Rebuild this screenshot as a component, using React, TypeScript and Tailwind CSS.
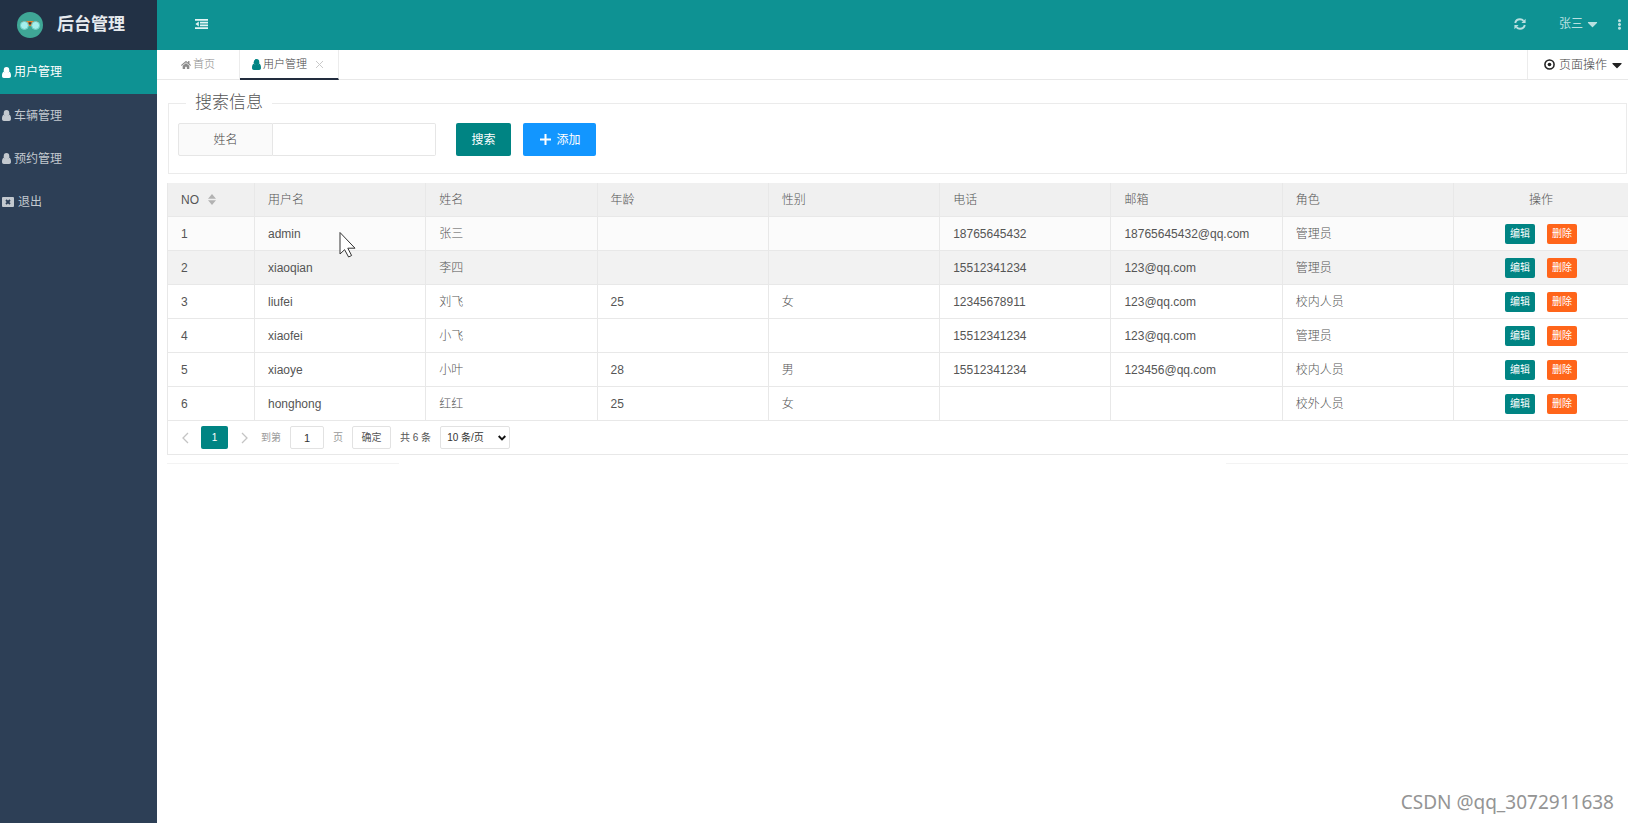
import React from "react";
import { FaCaretDown, FaEllipsisV, FaHome } from "react-icons/fa";

type User = {
  username: string;
  name: string;
  age: string;
  sex: string;
  phone: string;
  email: string;
  role: string;
};

const users: User[] = [
  { username: "admin", name: "张三", age: "", sex: "", phone: "18765645432", email: "18765645432@qq.com", role: "管理员" },
  { username: "xiaoqian", name: "李四", age: "", sex: "", phone: "15512341234", email: "123@qq.com", role: "管理员" },
  { username: "liufei", name: "刘飞", age: "25", sex: "女", phone: "12345678911", email: "123@qq.com", role: "校内人员" },
  { username: "xiaofei", name: "小飞", age: "", sex: "", phone: "15512341234", email: "123@qq.com", role: "管理员" },
  { username: "xiaoye", name: "小叶", age: "28", sex: "男", phone: "15512341234", email: "123456@qq.com", role: "校内人员" },
  { username: "honghong", name: "红红", age: "25", sex: "女", phone: "", email: "", role: "校外人员" },
];

const columns = ["用户名", "姓名", "年龄", "性别", "电话", "邮箱", "角色"];

const rowColors = ["bg-[#fbfbfb]", "bg-[#f2f2f2]"];

function UserIcon({ className }: { className?: string }) {
  return (
    <svg viewBox="0 0 10 12" className={className} fill="currentColor" aria-hidden="true">
      <ellipse cx="5" cy="3.4" rx="3.1" ry="3.4" />
      <path d="M2.2 5C.7 5.4 0 7.1 0 9.800 0 11.200.9 12 2 12h6c1.100 0 2-.8 2-2.200C10 7.100 9.300 5.400 7.800 5 7 6.300 6 6.600 5 6.600S3 6.300 2.200 5Z" />
    </svg>
  );
}

function ExitIcon({ className }: { className?: string }) {
  return (
    <svg viewBox="0 0 12 10" className={className} aria-hidden="true">
      <rect width="12" height="10" rx="1" fill="currentColor" />
      <path d="M4 3l4 4M8 3L4 7" stroke="#2d3f56" strokeWidth="1.800" />
    </svg>
  );
}

function RefreshIcon() {
  return (
    <svg viewBox="0 0 12 12" className="size-3" fill="none" stroke="currentColor" strokeWidth="1.900" aria-hidden="true">
      <path d="M1.200 5C1.700 2.800 3.600 1.300 6 1.300c1.500 0 2.700.6 3.600 1.600M10.800 7C10.300 9.200 8.400 10.700 6 10.700c-1.500 0-2.700-.6-3.600-1.600" />
      <path d="M11.600.8v4.200H7.400zM.4 11.200V7h4.200z" fill="currentColor" stroke="none" />
    </svg>
  );
}

function TargetIcon() {
  return (
    <svg viewBox="0 0 12 12" className="size-[11px]" fill="none" aria-hidden="true">
      <circle cx="6" cy="6" r="5" stroke="#222" strokeWidth="1.700" />
      <circle cx="6" cy="6" r="2" fill="#222" />
    </svg>
  );
}

function Logo() {
  return (
    <svg viewBox="0 0 26 26" className="size-[26px]" aria-hidden="true">
      <circle cx="13" cy="13" r="13" fill="#3fa796" />
      <path d="M5 9h16l1 3H4z" fill="#8a5a38" />
      <path d="M9.500 9h7L14.800 14h-3.600z" fill="#e08634" />
      <path d="M11.600 10.200h2.800v2.300h-2.800z" fill="#3a3d3c" />
      <circle cx="7.400" cy="13.400" r="4" fill="#a5efec" stroke="#6fcfc5" />
      <circle cx="18.600" cy="13.400" r="4" fill="#a5efec" stroke="#6fcfc5" />
    </svg>
  );
}

function FoldIcon() {
  return (
    <svg viewBox="0 0 13 10" className="h-[10px] w-[13px]" fill="currentColor" aria-hidden="true">
      <path d="M0 0h13v1.800H0zM5 2.700h8v1.800H5zM5 5.500h8v1.800H5zM0 8.200h13V10H0zM3.800 2.400v5.200L.4 5z" />
    </svg>
  );
}

function Chevron({ d }: { d: string }) {
  return (
    <svg viewBox="0 0 7 12" className="h-3 w-[7px]" fill="none" stroke="#c4c4c4" strokeWidth="1.300" aria-hidden="true">
      <path d={d} />
    </svg>
  );
}

function Sidebar() {
  const items = ["车辆管理", "预约管理"];
  return (
    <aside className="w-[157px] shrink-0 bg-[#2d3f56]">
      <div className="flex h-[50px] items-center gap-[14px] bg-[#223145] pl-[17px]">
        <Logo />
        <h1 className="text-[17px] font-bold text-[#e6eaee]">后台管理</h1>
      </div>
      <nav>
        <a href="#" className="flex h-11 items-center gap-[3px] bg-[#0e9293] pl-[2px] text-xs text-white">
          <UserIcon className="h-[11px] w-[9px]" />
          用户管理
        </a>
        {items.map((item) => (
          <a key={item} href="#" className="flex h-[43px] items-center gap-[3px] pl-[2px] text-xs text-[#c3c9cf]">
            <UserIcon className="h-[11px] w-[9px]" />
            {item}
          </a>
        ))}
        <a href="#" className="flex h-11 items-center gap-1 pl-[2px] text-xs text-[#c3c9cf]">
          <ExitIcon className="h-[10px] w-3" />
          退出
        </a>
      </nav>
    </aside>
  );
}

function Header() {
  return (
    <header className="flex h-[50px] items-center bg-[#0e9293] pb-[2px] text-[#b9e0e0]">
      <button type="button" aria-label="收起菜单" className="ml-[38px] text-[#e4f5f5]">
        <FoldIcon />
      </button>
      <button type="button" aria-label="刷新" className="ml-auto">
        <RefreshIcon />
      </button>
      <button type="button" className="ml-[33px] flex items-center gap-1 text-xs">
        张三
        <FaCaretDown className="h-4 w-[11px]" />
      </button>
      <button type="button" aria-label="更多" className="mr-[3px] ml-4">
        <FaEllipsisV className="size-[11px]" />
      </button>
    </header>
  );
}

function TabBar() {
  return (
    <div className="flex h-[30px] border-b border-[#e8e8e8] text-[11px]">
      <a href="#" className="flex w-[83px] items-center gap-[2px] border-r border-[#ececec] pl-6 font-light text-[#8b8b8b]">
        <FaHome className="size-[10px] text-[#8a8a8a]" />
        首页
      </a>
      <div className="flex h-[30px] w-[99px] items-center border-r border-b-2 border-r-[#ececec] border-b-[#222c3e] pl-3 font-light text-[#444]">
        <a href="#" className="flex items-center gap-[2px]">
          <UserIcon className="h-[11px] w-[9px] text-[#008483]" />
          用户管理
        </a>
        <button type="button" aria-label="关闭标签" className="ml-[9px]">
          <svg viewBox="0 0 7 7" className="size-[7px]" stroke="#c9c9c9" aria-hidden="true">
            <path d="M0 0l7 7M7 0L0 7" />
          </svg>
        </button>
      </div>
      <button type="button" className="ml-auto flex items-center gap-1 border-l border-[#ececec] pr-[5px] pl-4 text-xs font-light text-[#444]">
        <TargetIcon />
        页面操作
        <FaCaretDown className="h-4 w-3 text-[#222]" />
      </button>
    </div>
  );
}

function SearchPanel() {
  return (
    <fieldset className="mx-px border border-[#ebebeb] px-[9px] pb-[17px]">
      <legend className="ml-2 px-[9px] text-[17px] leading-6 font-light text-[#555]">搜索信息</legend>
      <form className="mt-2 flex h-[33px] text-xs" onSubmit={(e) => e.preventDefault()}>
        <label htmlFor="name" className="flex w-[95px] items-center justify-center rounded-l-xs border border-[#e6e6e6] bg-[#fafafa] font-light text-[#444]">
          姓名
        </label>
        <input id="name" type="text" className="w-[163px] rounded-r-xs border border-l-0 border-[#e6e6e6] px-2 outline-none" />
        <button type="submit" className="ml-5 w-[55px] rounded-xs bg-[#008483] text-white">
          搜索
        </button>
        <button type="button" className="ml-3 flex w-[73px] items-center justify-center gap-[5px] rounded-xs bg-[#1296ff] pl-[2px] text-white">
          <svg viewBox="0 0 11 11" className="size-[11px]" stroke="currentColor" strokeWidth="2" aria-hidden="true">
            <path d="M5.500 0v11M0 5.500h11" />
          </svg>
          添加
        </button>
      </form>
    </fieldset>
  );
}

function UserTable() {
  const cell = "border-r border-b border-[#e8e8e8] px-[13px] text-left font-light";
  return (
    <table className="w-full table-fixed border-separate border-spacing-0 text-xs text-[#555]">
      <thead>
        <tr className="h-[34px] bg-[#f0f0f0]">
          <th className={`w-[87px] ${cell}`}>
            <span className="flex items-center gap-[9px]">
              NO
              <svg viewBox="0 0 8 11" className="h-[11px] w-2" fill="#b2b2b2" aria-hidden="true">
                <path d="M4 0l4 4.700H0zM4 11l4-4.700H0z" />
              </svg>
            </span>
          </th>
          {columns.map((c) => (
            <th key={c} className={cell}>
              {c}
            </th>
          ))}
          <th className="w-[174px] border-b border-[#e8e8e8] text-center font-light">操作</th>
        </tr>
      </thead>
      <tbody>
        {users.map((u, i) => (
          <tr key={u.username} className={`h-[34px] ${rowColors[i] ?? "bg-white"}`}>
            <td className={cell}>{i + 1}</td>
            <td className={cell}>{u.username}</td>
            <td className={cell}>{u.name}</td>
            <td className={cell}>{u.age}</td>
            <td className={cell}>{u.sex}</td>
            <td className={cell}>{u.phone}</td>
            <td className={cell}>{u.email}</td>
            <td className={cell}>{u.role}</td>
            <td className="border-b border-[#e8e8e8]">
              <div className="flex justify-center gap-3 text-[10px] text-white">
                <button type="button" className="h-5 w-[30px] rounded-xs bg-[#008483]">
                  编辑
                </button>
                <button type="button" className="h-5 w-[30px] rounded-xs bg-[#ff651a]">
                  删除
                </button>
              </div>
            </td>
          </tr>
        ))}
      </tbody>
    </table>
  );
}

function Pager() {
  return (
    <div className="flex h-[33px] items-center pl-[14px] text-[10px] text-[#999]">
      <button type="button" aria-label="上一页">
        <Chevron d="M6 1L1 6l5 5" />
      </button>
      <button type="button" className="ml-3 h-[23px] w-[27px] rounded-xs bg-[#008483] text-white">
        1
      </button>
      <button type="button" aria-label="下一页" className="ml-[13px]">
        <Chevron d="M1 1l5 5-5 5" />
      </button>
      <label htmlFor="page" className="ml-[13px]">
        到第
      </label>
      <input id="page" type="text" defaultValue="1" className="ml-[9px] h-[23px] w-[34px] rounded-xs border border-[#e2e2e2] text-center text-[11px] text-[#333]" />
      <span className="ml-[9px]">页</span>
      <button type="button" className="ml-[9px] h-[23px] w-[39px] rounded-xs border border-[#e2e2e2] text-[#555]">
        确定
      </button>
      <span className="ml-[9px] text-[#555]">共 6 条</span>
      <div className="relative ml-[9px]">
        <select aria-label="每页条数" className="h-[23px] w-[70px] appearance-none rounded-xs border border-[#e2e2e2] bg-white pl-[6px] text-[10px] text-[#333]">
          <option>10 条/页</option>
          <option>20 条/页</option>
        </select>
        <svg viewBox="0 0 8 6" className="pointer-events-none absolute top-[9px] right-1 h-[6px] w-2" fill="none" stroke="#111" strokeWidth="1.900" aria-hidden="true">
          <path d="M.7 1L4 4.400 7.300 1" />
        </svg>
      </div>
    </div>
  );
}

export default function App() {
  return (
    <div className="relative flex min-h-screen bg-white font-['Liberation_Sans','Noto_Sans_CJK_SC',sans-serif]">
      <Sidebar />
      <div className="min-w-0 flex-1">
        <Header />
        <TabBar />
        <main className="pt-[11px] pl-[10px]">
          <SearchPanel />
          <section className="mt-[9px] border-b border-l border-[#e8e8e8]">
            <UserTable />
            <Pager />
          </section>
          <div className="mt-2 flex justify-between">
            <span className="h-px w-[232px] bg-[#f3f3f3]" />
            <span className="h-px w-[402px] bg-[#f3f3f3]" />
          </div>
        </main>
      </div>
      <svg viewBox="0 0 17 27" className="pointer-events-none absolute top-[231px] left-[339px] h-[27px] w-[17px]" fill="#fff" stroke="#333" aria-hidden="true">
        <path d="M1 1.500V23l4.600-4.300 4 7.300 3-1.500-3.800-7.300H16z" />
      </svg>
      <p className="absolute right-[14px] bottom-[7px] font-['Noto_Sans',sans-serif] text-[19px] leading-7 text-[#949494]">CSDN @qq_3072911638</p>
    </div>
  );
}
